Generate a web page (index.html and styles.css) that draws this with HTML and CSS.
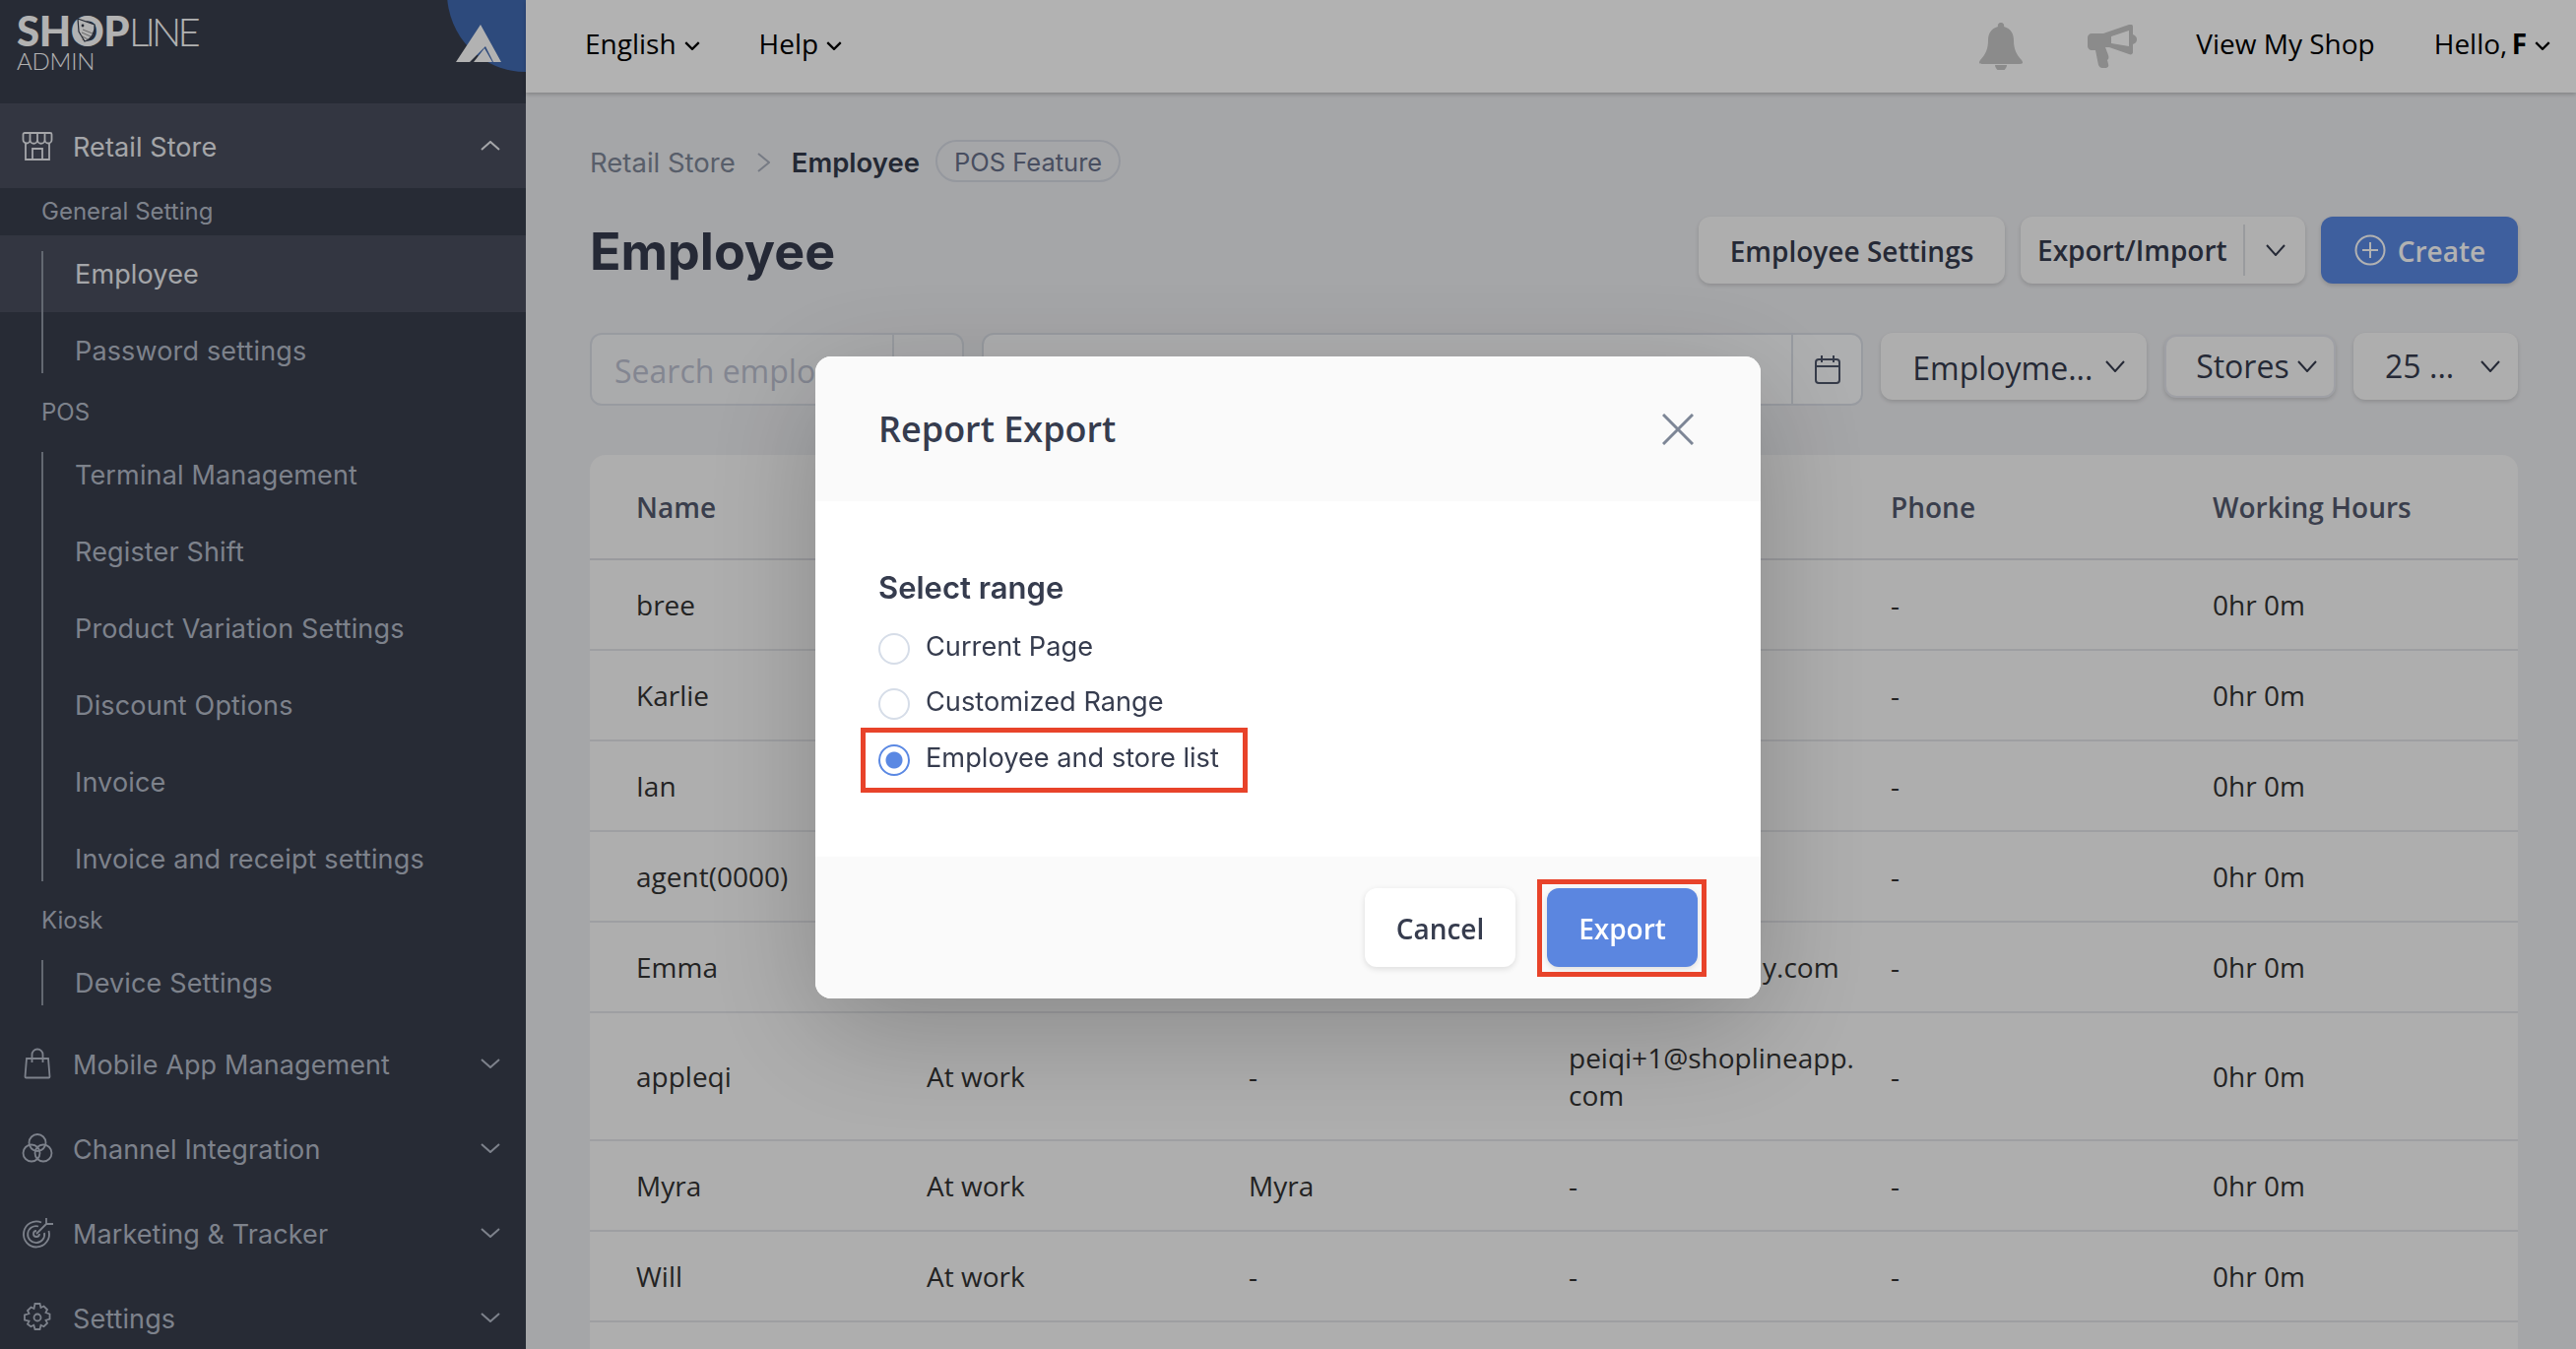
FILE: index.html
```html
<!DOCTYPE html>
<html lang="en">
<head>
<meta charset="utf-8">
<title>Employee</title>
<link rel="stylesheet" href="styles.css">
</head>
<body>
<div class="app">
  <aside class="sidebar">
    <div class="brand">
      <div class="brand-text">
        <div class="brand-name"><b>SHOP</b><span>LINE</span></div>
        <div class="brand-sub">ADMIN</div>
      </div>
      <svg class="brand-tag" viewBox="0 0 28 28"><circle cx="14" cy="14" r="9.5" fill="#fff"/><path d="M7 2 L24 8 C25 15 21 23 14 25 L8 15 Z" fill="#fff" stroke="#383e4d" stroke-width="1.2"/><circle cx="12" cy="9" r="1.4" fill="#383e4d"/><path d="M11 16 L20 20 M10 19 L17 23 M12 13 L22 17" stroke="#777" stroke-width=".8"/></svg>
      <div class="brand-corner"></div>
      <svg class="brand-mark" viewBox="0 0 46 38"><path d="M0 38 L25 0 L46 38 L38 38 L30 22 L14 38 Z" fill="#fff"/><path d="M18 38 L29 24 L37 38 Z" fill="#fff"/></svg>
    </div>
    <nav>
      <div class="nav-row active">
        <svg class="nav-icon" viewBox="0 0 32 32"><path d="M4 13v17h24V13M3 3h26a1.500 1.500 0 0 1 1.500 1.500V10a3.500 3.500 0 0 1-7 0 3.700 3.700 0 0 1-7.500 0 3.700 3.700 0 0 1-7.500 0 3.500 3.500 0 0 1-7 0V4.500A1.500 1.500 0 0 1 3 3ZM8.500 3v7M16 3v7M23.500 3v7M11 30V19h10v11"/></svg>
        <span>Retail Store</span>
        <svg class="caret" viewBox="0 0 20 10"><path d="M1 9l9-8 9 8"/></svg>
      </div>
      <div class="group-label">General Setting</div>
      <ul class="sub">
        <li class="current"><a>Employee</a></li>
        <li><a>Password settings</a></li>
      </ul>
      <div class="group-label">POS</div>
      <ul class="sub">
        <li><a>Terminal Management</a></li>
        <li><a>Register Shift</a></li>
        <li><a>Product Variation Settings</a></li>
        <li><a>Discount Options</a></li>
        <li><a>Invoice</a></li>
        <li><a>Invoice and receipt settings</a></li>
      </ul>
      <div class="group-label">Kiosk</div>
      <ul class="sub">
        <li><a>Device Settings</a></li>
      </ul>
      <div class="nav-row">
        <svg class="nav-icon" viewBox="0 0 32 32"><path d="M5 11h22l1.500 18.500a1 1 0 0 1-1 1h-23a1 1 0 0 1-1-1ZM10.500 15V7a5.500 5.500 0 0 1 11 0v8"/></svg>
        <span>Mobile App Management</span>
        <svg class="caret" viewBox="0 0 20 10"><path d="M1 1l9 8 9-8"/></svg>
      </div>
      <div class="nav-row">
        <svg class="nav-icon" viewBox="0 0 32 32"><circle cx="16" cy="10.500" r="8.500"/><circle cx="10" cy="21" r="8.500"/><circle cx="22" cy="21" r="8.500"/></svg>
        <span>Channel Integration</span>
        <svg class="caret" viewBox="0 0 20 10"><path d="M1 1l9 8 9-8"/></svg>
      </div>
      <div class="nav-row">
        <svg class="nav-icon" viewBox="0 0 32 32"><path d="M20 5.500A13 13 0 1 0 27.500 14M17 9.500A8.500 8.500 0 1 0 23 16M15 14a3 3 0 1 0 3 3M15 17 25 7M25 7V1M25 7h7"/></svg>
        <span>Marketing &amp; Tracker</span>
        <svg class="caret" viewBox="0 0 20 10"><path d="M1 1l9 8 9-8"/></svg>
      </div>
      <div class="nav-row">
        <svg class="nav-icon" viewBox="0 0 32 32"><circle cx="16" cy="16" r="3.500"/><path d="M13.500 2h5l1 4 3-1.500 3.500 3.500-1.500 3 4 1.500v5l-4 1.200 1.500 3-3.500 3.500-3-1.500-1 4.300h-5l-1.200-4.300-3 1.500L6 22.700l1.500-3-4.500-1.200v-5l4.500-1.500-1.500-3L9.500 5.500l3 1.500Z"/></svg>
        <span>Settings</span>
        <svg class="caret" viewBox="0 0 20 10"><path d="M1 1l9 8 9-8"/></svg>
      </div>
    </nav>
  </aside>

  <div class="content">
    <header class="topbar">
      <div class="top-group">
        <span class="top-link">English<svg class="mini" viewBox="0 0 14 8"><path d="M1 1l6 6 6-6"/></svg></span>
        <span class="top-link">Help<svg class="mini" viewBox="0 0 14 8"><path d="M1 1l6 6 6-6"/></svg></span>
      </div>
      <div class="top-group right">
        <svg class="bell" viewBox="0 0 44 48"><path d="M22 0a3 3 0 0 1 3 4c7 2 10 7 10 14 0 9 3 15 8 20 2 3 1 4-2 4H3c-3 0-4-1-2-4 5-5 8-11 8-20 0-7 3-12 10-14a3 3 0 0 1 3-4Z"/><path d="M16 43a6 6 0 0 0 12 0Z"/></svg>
        <svg class="horn" viewBox="0 0 50 44"><path d="M0 13c0-2 2-4 4-4h12L42 0c2-1 4 0 4 2v8c3 1 4 3 4 5s-1 4-4 5v8c0 2-2 3-4 2L22 23h-4l3 8c1 3 0 4-1 5l1 4c1 3-1 4-4 4h-2c-2 0-3-1-4-3l-3-15H4c-2 0-4-2-4-4Zm42 9V6L24 12v7Z" fill-rule="evenodd"/></svg>
        <span class="top-link shop">View My Shop</span>
        <span class="top-link"><span class="hello">Hello, <b>F</b></span><svg class="mini" viewBox="0 0 14 8"><path d="M1 1l6 6 6-6"/></svg></span>
      </div>
    </header>

    <main class="page">
      <div class="crumbs">
        <span class="crumb">Retail Store</span>
        <svg class="crumb-sep" viewBox="0 0 13 20"><path d="M1 1l11 9-11 9"/></svg>
        <strong class="crumb-now">Employee</strong>
        <span class="badge">POS Feature</span>
      </div>

      <div class="title-row">
        <h1>Employee</h1>
        <div class="actions">
          <button class="btn settings">Employee Settings</button>
          <div class="btn split">
            <span class="split-label">Export/Import</span>
            <span class="split-arrow"><svg class="arrow" viewBox="0 0 20 12"><path d="M1 1l9 10 9-10"/></svg></span>
          </div>
          <button class="btn create">
            <svg class="plus" viewBox="0 0 32 32"><circle cx="16" cy="16" r="14.500"/><path d="M16 8v16M8 16h16"/></svg>
            <span>Create</span>
          </button>
        </div>
      </div>

      <div class="filters">
        <div class="field search"><span class="ph">Search emplo</span><span class="addon"></span></div>
        <div class="field date"><span class="ph"></span>
          <span class="addon cal"><svg class="calendar" viewBox="0 0 28 30"><rect x="2" y="5" width="24" height="24" rx="3"/><path d="M2 12h24M8 1v7M20 1v7"/></svg></span>
        </div>
        <button class="btn sel employ"><span>Employme...</span><svg class="arrow" viewBox="0 0 20 12"><path d="M1 1l9 10 9-10"/></svg></button>
        <button class="btn sel stores"><span>Stores</span><svg class="arrow" viewBox="0 0 20 12"><path d="M1 1l9 10 9-10"/></svg></button>
        <button class="btn sel count"><span>25 ...</span><svg class="arrow" viewBox="0 0 20 12"><path d="M1 1l9 10 9-10"/></svg></button>
      </div>

      <div class="card">
        <table>
          <colgroup><col class="c1"><col class="c2"><col class="c3"><col class="c4"><col class="c5"><col class="c6"></colgroup>
          <thead><tr><th>Name</th><th></th><th></th><th></th><th>Phone</th><th>Working Hours</th></tr></thead>
          <tbody>
            <tr><td>bree</td><td></td><td></td><td></td><td>-</td><td>0hr 0m</td></tr>
            <tr><td>Karlie</td><td></td><td></td><td></td><td>-</td><td>0hr 0m</td></tr>
            <tr><td>Ian</td><td></td><td></td><td></td><td>-</td><td>0hr 0m</td></tr>
            <tr><td>agent(0000)</td><td></td><td></td><td></td><td>-</td><td>0hr 0m</td></tr>
            <tr><td>Emma</td><td></td><td></td><td class="tail">y.com</td><td>-</td><td>0hr 0m</td></tr>
            <tr class="tall"><td>appleqi</td><td>At work</td><td>-</td><td>peiqi+1@shoplineapp.<br>com</td><td>-</td><td>0hr 0m</td></tr>
            <tr><td>Myra</td><td>At work</td><td>Myra</td><td>-</td><td>-</td><td>0hr 0m</td></tr>
            <tr><td>Will</td><td>At work</td><td>-</td><td>-</td><td>-</td><td>0hr 0m</td></tr>
            <tr><td>&nbsp;</td><td></td><td></td><td></td><td></td><td></td></tr>
          </tbody>
        </table>
      </div>
    </main>
  </div>
</div>

<div class="backdrop"></div>

<section class="modal">
  <div class="modal-head">
    <h2>Report Export</h2>
    <svg class="close" viewBox="0 0 32 32"><path d="M1 1l30 30M31 1 1 31"/></svg>
  </div>
  <div class="modal-body">
    <h3>Select range</h3>
    <label class="radio"><span class="dot"></span>Current Page</label>
    <label class="radio"><span class="dot"></span>Customized Range</label>
    <label class="radio"><span class="dot on"></span>Employee and store list</label>
  </div>
  <div class="modal-foot">
    <button class="mbtn cancel">Cancel</button>
    <button class="mbtn export">Export</button>
  </div>
  <div class="mark mark-radio"></div>
  <div class="mark mark-export"></div>
</section>
</body>
</html>
```
FILE: styles.css
```css
* { box-sizing: border-box; }
html, body { margin: 0; height: 100%; overflow: hidden; }
body { font-family: "Open Sans", sans-serif; color: #333; background: #edeef1; }
.app { display: flex; height: 1370px; }

/* sidebar */
.sidebar { width: 534px; flex: none; background: #383e4d; color: #b4bac8; font-family: Inter, sans-serif; overflow: hidden; position: relative; }
.brand { height: 105px; padding: 10px 0 0 17px; position: relative; color: #fff; overflow: hidden; }
.brand-name { font-family: Lato, sans-serif; font-size: 42px; line-height: 42px; letter-spacing: -.5px; }
.brand-name b { font-weight: 900; }
.brand-name span { font-weight: 300; letter-spacing: -3.8px; font-size: 40px; }
.brand-sub { font-family: Lato, sans-serif; font-size: 24px; line-height: 24px; font-weight: 300; margin-top: -3px; letter-spacing: -.2px; }
.brand-tag { position: absolute; left: 72px; top: 17px; width: 28px; height: 28px; }
.brand-corner { position: absolute; right: -80px; top: -87px; width: 160px; height: 160px; border-radius: 50%; background: #416ab2; }
.brand-mark { position: absolute; left: 463px; top: 25px; width: 46px; height: 38px; }
.nav-row { height: 86px; display: flex; align-items: center; padding: 0 26px 0 22px; font-size: 27px; letter-spacing: .1px; }
.nav-row span { flex: 1; margin-left: 20px; padding-top: 2px; }
.nav-row.active { background: #494e5d; color: #eceef3; }
.nav-icon { width: 32px; height: 32px; fill: none; stroke: currentColor; stroke-width: 1.800; flex: none; }
.caret { width: 20px; height: 10px; fill: none; stroke: currentColor; stroke-width: 2; flex: none; }
.group-label { height: 48px; line-height: 48px; padding-left: 42px; font-size: 24px; }
.sub { list-style: none; margin: 0; padding: 0; position: relative; }
.sub::before { content: ""; position: absolute; left: 42px; top: 16px; bottom: 16px; width: 2px; background: #8f95a2; }
.sub li { height: 78px; line-height: 80px; padding-left: 76px; font-size: 27px; letter-spacing: .15px; }
.sub li.current { background: #494e5d; color: #eceef3; }

/* top bar */
.content { flex: 1; min-width: 0; display: flex; flex-direction: column; }
.topbar { height: 94px; flex: none; background: #fff; box-shadow: 0 2px 4px rgba(0,0,0,.2); display: flex; justify-content: space-between; align-items: center; padding: 0 26px 0 60px; position: relative; }
.top-group { display: flex; align-items: center; gap: 60px; }
.top-group.right { gap: 0; }
.top-link { font-size: 28px; color: #000; display: inline-flex; align-items: center; gap: 8px; margin-top: -6px; }
.hello { word-spacing: -3px; }
.mini { width: 16px; height: 9px; fill: none; stroke: #000; stroke-width: 2; margin-top: 4px; }
.bell { width: 44px; height: 48px; fill: #c7c7c7; }
.horn { width: 50px; height: 44px; fill: #c7c7c7; margin-left: 66px; }
.shop { margin-left: 60px; margin-right: 60px; }

/* page */
.page { flex: 1; padding: 48px 59px 0 65px; min-height: 0; }
.crumbs { display: flex; align-items: center; height: 43px; font-family: Inter, sans-serif; font-size: 27.5px; }
.crumb { color: #7f8798; margin-top: 2px; }
.crumb-sep { width: 13px; height: 20px; fill: none; stroke: #aab0bd; stroke-width: 2; margin: 2px 22px 0; }
.crumb-now { font-weight: 600; color: #333a4b; margin-top: 2px; }
.badge { margin-left: 16px; height: 43px; line-height: 41px; padding: 0 17px; border: 2px solid #d6dae3; border-radius: 22px; font-size: 25.5px; color: #67708a; }
.title-row { display: flex; justify-content: space-between; align-items: center; margin-top: 35px; height: 68px; }
h1 { margin: 2px 0 0; font-family: Inter, sans-serif; font-size: 52px; font-weight: 700; color: #363c4e; }
.actions { display: flex; gap: 16px; }
.btn { background: #f9f9f9; border: 0; border-radius: 12px; height: 68px; font-family: "Open Sans", sans-serif; font-size: 28px; font-weight: 600; color: #363c4e; box-shadow: 0 2px 4px rgba(0,0,0,.15); display: flex; align-items: center; justify-content: center; padding: 0; }
.settings { width: 311px; padding-top: 2px; }
.split { width: 289px; justify-content: flex-start; }
.split-label { width: 226px; padding-left: 17px; }
.split-arrow { flex: 1; height: 52px; border-left: 2px solid #dcdee3; display: flex; align-items: center; justify-content: center; }
.arrow { width: 20px; height: 12px; fill: none; stroke: #363c4e; stroke-width: 2; }
.create { width: 200px; background: #5a88e3; color: #fff; gap: 12px; padding-left: 1px; }
.create span { margin-top: 2px; }
.plus { width: 32px; height: 32px; fill: none; stroke: #fff; stroke-width: 2; }

.filters { display: flex; align-items: flex-start; margin-top: 50px; gap: 18px; }
.field { height: 74px; border: 2px solid #dadee6; border-radius: 12px; display: flex; background: #f4f5f7; font-size: 32px; }
.ph { flex: 1; color: #bcc1d0; line-height: 74px; padding-left: 23px; white-space: nowrap; overflow: hidden; }
.addon { border-left: 2px solid #dadee6; flex: none; }
.search { width: 380px; }
.search .addon { width: 71px; }
.date { width: 896px; background: #fafbfc; }
.date .addon { width: 71px; display: flex; align-items: center; justify-content: center; }
.calendar { width: 28px; height: 30px; fill: none; stroke: #4e566a; stroke-width: 2; }
.sel { font-size: 32px; font-weight: 400; justify-content: space-between; }
.employ { width: 270px; padding: 0 22px 0 32px; }
.employ span { margin-top: 3px; }
.stores { width: 174px; padding: 0 17px 0 30px; height: 64px; margin-top: 2px; border: 2px solid #e4e6ec; }
.stores span { margin-top: -2px; }
.count { width: 167px; padding: 0 18px 0 32px; }
.count span { margin-top: -2px; }

.card { margin-top: 50px; background: #f9f9f9; border-radius: 16px 16px 0 0; overflow: hidden; }
table { width: 1958px; table-layout: fixed; border-collapse: collapse; font-size: 28px; color: #333; }
.c1 { width: 342px; } .c2 { width: 327px; } .c3 { width: 325px; } .c4 { width: 327px; } .c5 { width: 327px; } .c6 { width: 310px; }
th { height: 106px; text-align: left; font-weight: 600; color: #535a6e; padding: 0 0 0 47px; border-bottom: 2px solid #dcdde2; }
td { height: 92px; padding: 0 0 0 47px; border-bottom: 2px solid #e3e4e8; line-height: 38px; }
td:nth-child(n+2) { padding-left: 0; }
th:nth-child(n+2) { padding-left: 0; }
tr.tall td { height: 130px; }
td.tail { padding-left: 197px; }

/* modal */
.backdrop { position: fixed; inset: 0; background: rgba(0,0,0,.3); }
.modal { position: fixed; left: 828px; top: 362px; width: 960px; height: 652px; background: #fff; border-radius: 16px; box-shadow: 0 30px 120px rgba(0,0,0,.22); display: flex; flex-direction: column; overflow: visible; font-family: Inter, sans-serif; }
.modal-head { height: 147px; background: #fafafa; border-radius: 16px 16px 0 0; display: flex; justify-content: space-between; align-items: center; padding: 0 68px 0 64px; }
h2 { margin: 0; font-family: "Open Sans", sans-serif; font-size: 36px; font-weight: 600; color: #363c4e; }
.close { width: 32px; height: 32px; fill: none; stroke: #7d8696; stroke-width: 3; }
.modal-body { flex: 1; padding: 68px 64px 0; }
h3 { margin: 0 0 11px; font-size: 31px; line-height: 40px; font-weight: 600; color: #363c4e; }
.radio { display: flex; align-items: center; height: 56.5px; font-size: 27.2px; color: #363c4e; gap: 16px; }
.dot { width: 32px; height: 32px; border-radius: 50%; border: 2px solid #d6dde8; background: #fff; flex: none; margin-top: 5px; }
.dot.on { border-color: #5a88e3; background: radial-gradient(circle, #5a88e3 0 8px, #fff 9px); }
.modal-foot { height: 144px; background: #fafafa; border-radius: 0 0 16px 16px; display: flex; justify-content: flex-end; gap: 32px; padding: 32px 64px 0 0; }
.mbtn { width: 153px; height: 80px; border: 0; border-radius: 12px; padding-top: 3px; font-family: "Open Sans", sans-serif; font-size: 28px; font-weight: 600; box-shadow: 0 2px 6px rgba(0,0,0,.12); }
.cancel { background: #fff; color: #363c4e; }
.export { background: #5b86e0; color: #fff; }
.mark { position: absolute; border: 5px solid #e8432a; }
.mark-radio { left: 46px; top: 377px; width: 393px; height: 66px; }
.mark-export { left: 733px; top: 531px; width: 172px; height: 99px; }
```
